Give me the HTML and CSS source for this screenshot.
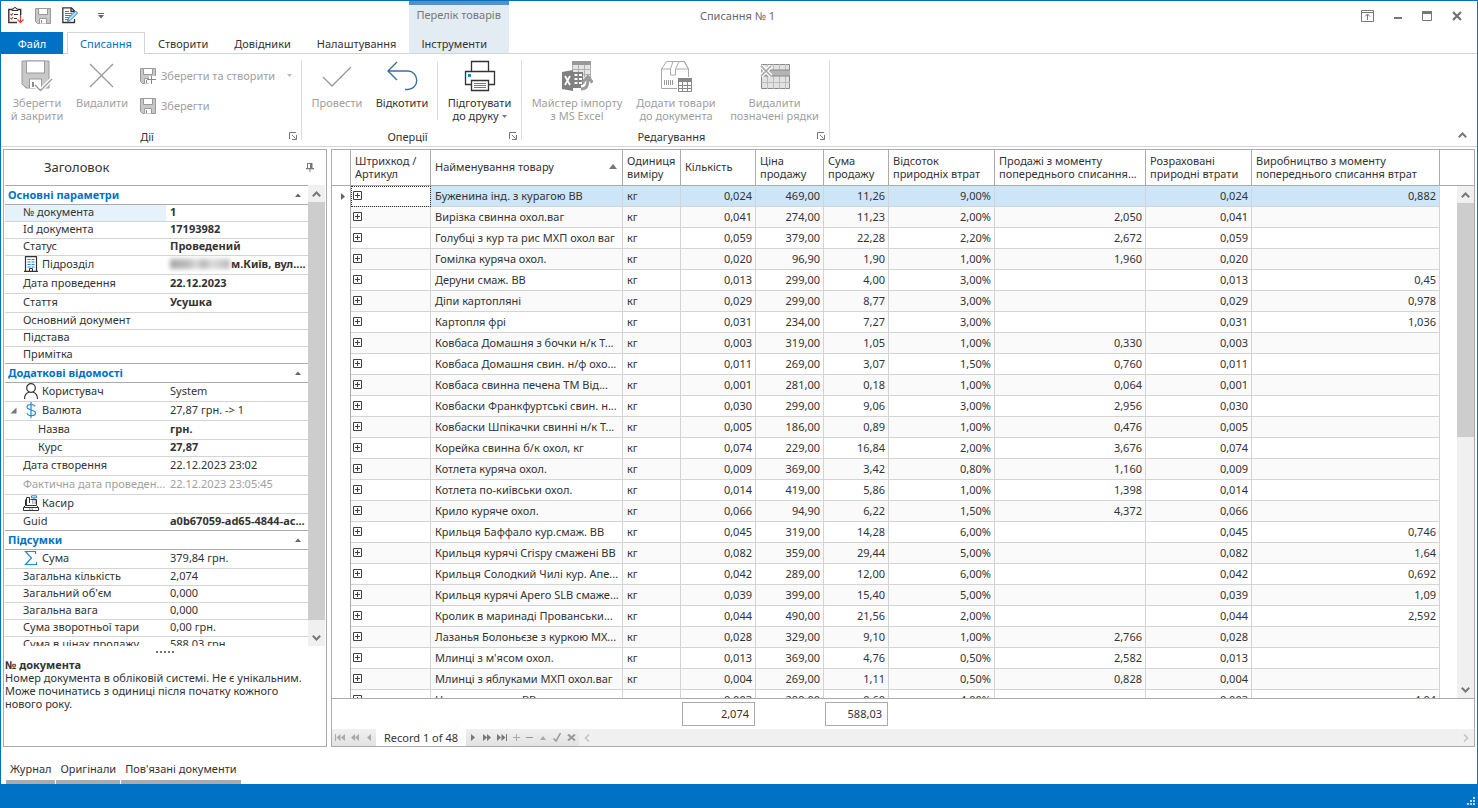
FILE: index.html
```html
<!DOCTYPE html>
<html lang="uk">
<head>
<meta charset="utf-8">
<title>Списання № 1</title>
<link rel="stylesheet" href="styles.css">
</head>
<body>
<svg class="defs" aria-hidden="true">
  <symbol id="plus" viewBox="0 0 9 9"><path d="M.5.5h8v8h-8zM2 4.500h5M4.500 2v5" fill="none" stroke="#404040"/></symbol>
  <symbol id="launch" viewBox="0 0 8 8"><path d="M.5 7V.5H7M7.500 3v4.500H3M3 3l3.500 3.500" fill="none" stroke="#777"/></symbol>
  <symbol id="up" viewBox="0 0 9 6"><path d="M.8 5.200L4.500 1.500l3.700 3.700" fill="none" stroke="#777" stroke-width="2"/></symbol>
  <symbol id="tri" viewBox="0 0 6 4"><path d="M0 4L3 .5 6 4z" fill="#666"/></symbol>
  <symbol id="disk" viewBox="0 0 16 16"><path d="M.5.5h15v15H2.500l-2-2z" fill="#c8c8c8" stroke="#999"/><path d="M3.500.5h9v6h-9zM4.500 15.500v-5h7v5" fill="#fff" stroke="#999"/><path d="M6 12h1v3H6z" fill="#8a8a8a"/></symbol>
</svg>
<div class="window">
  <header class="head">
    <h1 class="title">Списання № 1</h1>
    <div class="quick">
      <button aria-label="Провести"><svg width="16" height="17" viewBox="0 0 16 17"><path d="M4 2.500H.8v13H9M10 2.500h2.700V8" fill="none" stroke="#333" stroke-width="1.400"/><path d="M4 3.500V2h1.500a1.500 1.500 0 0 1 3 0H10v1.500z" fill="#fff" stroke="#333"/><path d="M2.500 7l1 1L5 6M2.500 11l1 1L5 10M12.500 8v7.500M9.500 12.500l3 3 3-3" fill="none" stroke="#d8402f" stroke-width="1.200"/><path d="M6 7.500h4M6 11.500h3" stroke="#333"/></svg></button>
      <button aria-label="Зберегти"><svg width="16" height="16"><use href="#disk"/></svg></button>
      <button aria-label="Редагувати"><svg width="16" height="17" viewBox="0 0 16 17"><path d="M12.500 6V4L9.500.8H.8v14.700h11.700V12M9 1v3.500h3" fill="none" stroke="#333" stroke-width="1.300"/><path d="M3 4.500h4M3 6.500h7M3 8.500h6M3 10.500h4M3 12.500h3" stroke="#4a7ea6"/><path d="M5.500 14.500l1-3.500L13.500 4l2 2-7 7.200z" fill="#b5dcf5" stroke="#2a86c4"/></svg></button>
      <button class="more" aria-label="Налаштувати панель"><svg width="6" height="6" viewBox="0 0 6 6"><path d="M0 .5h6" stroke="#666"/><path d="M0 2h6L3 5.500z" fill="#666"/></svg></button>
    </div>
    <nav class="tabs">
      <button class="file">Файл</button><button class="tab on">Списання</button><button class="tab">Створити</button><button class="tab">Довідники</button><button class="tab">Налаштування</button>
    </nav>
    <div class="context"><span>Перелік товарів</span><button class="tab">Інструменти</button></div>
    <div class="wbtns">
      <button aria-label="Сховати стрічку"><svg width="13" height="12" viewBox="0 0 13 12"><path d="M.5.5h12v11H.5zM.5 2.500h12M6.500 10V4.500M4 6.500l2.500-2.500L9 6.500" fill="none" stroke="#777"/></svg></button>
      <button aria-label="Згорнути"><svg width="8" height="12" viewBox="0 0 8 12"><path d="M0 8h8" stroke="#777" stroke-width="2"/></svg></button>
      <button aria-label="Розгорнути"><svg width="10" height="10" viewBox="0 0 10 10"><path d="M.5.5h9v9h-9z" fill="none" stroke="#777"/><path d="M0 0h10v3H0z" fill="#777"/></svg></button>
      <button aria-label="Закрити"><svg width="10" height="10" viewBox="0 0 10 10"><path d="M1 1l8 8M9 1L1 9" stroke="#707070" stroke-width="2.200"/></svg></button>
    </div>
  </header>

  <section class="ribbon">
    <div class="group g1">
      <div class="tools">
        <button class="big w72" disabled><svg width="32" height="32" viewBox="0 0 32 32"><path d="M1 1h27v27H5l-4-4z" fill="#c8c8c8" stroke="#999"/><path d="M5.500 1h18v12h-18zM8.500 28v-9h12v9" fill="#fff" stroke="#999"/><path d="M11 22h2v5h-2z" fill="#8a8a8a"/><path d="M14 25l5.500 5.500L31 19" fill="none" stroke="#fff" stroke-width="4"/><path d="M14 25l5.500 5.500L31 19" fill="none" stroke="#999" stroke-width="1.300"/></svg><span>Зберегти<br>й закрити</span></button>
        <button class="big w58" disabled><svg width="32" height="32" viewBox="0 0 32 32"><path d="M4 4l23 23M27 4L4 27" stroke="#9a9a9a" stroke-width="1.300"/></svg><span>Видалити</span></button>
        <div class="smalls">
          <button class="small" disabled><svg width="16" height="16"><use href="#disk"/><path d="M9 8h7v8H9z" fill="#fff"/><path d="M11.500 7.500V16M7 11.500h9" stroke="#888"/></svg>Зберегти та створити<svg class="drop" width="5" height="3" viewBox="0 0 5 3"><path d="M0 0h5L2.500 3z" fill="#bbb"/></svg></button>
          <button class="small" disabled><svg width="16" height="16"><use href="#disk"/></svg>Зберегти</button>
        </div>
      </div>
      <div class="cap"><span>Дії</span><button aria-label="Дії: параметри"><svg width="8" height="8"><use href="#launch"/></svg></button></div>
    </div>
    <div class="group">
      <div class="tools">
        <button class="big w70" disabled><svg width="32" height="32" viewBox="0 0 32 32"><path d="M2 17l9 9L30 7" fill="none" stroke="#999" stroke-width="1.300"/></svg><span>Провести</span></button>
        <button class="big w60"><svg width="32" height="32" viewBox="0 0 32 32"><path d="M11 2L2 11l9 9M2 11h20a8.500 9 0 0 1 0 18.500h-3" fill="none" stroke="#3a6ea8" stroke-width="1.400"/></svg><span>Відкотити</span></button>
        <i class="sep"></i>
        <button class="big w83"><svg width="32" height="32" viewBox="0 0 32 32"><path d="M7.500 11V1.500h17V11M7 24.500H1.500v-13h29v13H25M7.500 20.500h17v10h-17z" fill="none" stroke="#333" stroke-width="1.300"/><path d="M10 23.500h12M10 25.500h12M10 27.500h12" stroke="#777"/><path d="M4 14h3v3H4z" fill="#1e88d2"/></svg><span>Підготувати<br>до друку <svg width="5" height="3" class="inl" viewBox="0 0 5 3"><path d="M0 0h5L2.500 3z" fill="#777"/></svg></span></button>
      </div>
      <div class="cap"><span>Оперції</span><button aria-label="Оперції: параметри"><svg width="8" height="8"><use href="#launch"/></svg></button></div>
    </div>
    <div class="group">
      <div class="tools">
        <button class="big w110" disabled><svg width="32" height="32" viewBox="0 0 32 32"><path d="M11.500 1.500h18v22h-18z" fill="#e4e4e4" stroke="#b0b0b0"/><path d="M11 1h19v4H11z" fill="#999"/><path d="M11 9.500h19M11 14.500h19M17.500 5v12M23.500 5v12" stroke="#b0b0b0"/><path d="M1 12l11-2v21L1 29z" fill="#808080"/><path d="M4 16l5 9M9 16l-5 9" stroke="#fff" stroke-width="1.800"/><path d="M12 12h10v16H12z" fill="#808080"/><path d="M13.500 14h3v2h-3zM18 14h3v2h-3zM13.500 18h3v2h-3zM18 18h3v2h-3zM13.500 22h3v2h-3zM18 22h3v2h-3z" fill="#fff"/><path d="M20 28c6 0 7-2 7-10" fill="none" stroke="#fff" stroke-width="6"/><path d="M20 29c5 0 7-2 7-11M21.500 22.500l5.500-6 4.500 6" fill="none" stroke="#9a9a9a" stroke-width="3"/></svg><span>Майстер імпорту<br>з MS Excel</span></button>
        <button class="big w88" disabled><svg width="32" height="32" viewBox="0 0 32 32"><path d="M17 28.500H1.500V9l5-7.500h18L28.500 9v8M1.500 9h9M15.500 9h13M10.500 9L13 1.500M10.500 9v6h5V9L19 1.500M24 1.500L28.500 9" fill="none" stroke="#aaa"/><path d="M4.500 20v5M6.500 20v5M8.500 20v5M10.500 20v5M12.500 20v5" stroke="#999"/><path d="M18.500 18.500h13v13h-13z" fill="#fff" stroke="#888"/><path d="M18 18h14v4H18z" fill="#888"/><path d="M18 25.500h14M18 28.500h14M22.500 22v10M27.500 22v10" stroke="#888"/></svg><span>Додати товари<br>до документа</span></button>
        <button class="big w109" disabled><svg width="32" height="32" viewBox="0 0 32 32"><path d="M2.500 4.500h28v24h-28z" fill="#e2e2e2" stroke="#888"/><path d="M2 10h29v6H2z" fill="#b4b4b4"/><path d="M8.500 4v25M14.500 4v6M14.500 16v13M20.500 4v6M20.500 16v13M26.500 4v6M26.500 16v13M2 22.500h29" stroke="#bbb"/><path d="M2 10h29M2 16h29" stroke="#888"/><path d="M2 6l10 10M12 6L2 16" stroke="#fff" stroke-width="4"/><path d="M2 6l10 10M12 6L2 16" stroke="#aaa" stroke-width="1.600"/></svg><span>Видалити<br>позначені рядки</span></button>
      </div>
      <div class="cap"><span>Редагування</span><button aria-label="Редагування: параметри"><svg width="8" height="8"><use href="#launch"/></svg></button></div>
    </div>
    <button class="collapse" aria-label="Згорнути стрічку"><svg width="9" height="6"><use href="#up"/></svg></button>
  </section>

  <main class="main">
    <aside class="panel side">
      <div class="side-head"><h2>Заголовок</h2><button aria-label="Закріпити"><svg width="8" height="9" viewBox="0 0 8 9"><path d="M1.500 0v5.500M2 .5h4" stroke="#777" fill="none"/><path d="M4 0h2.500v5.500H4zM0 5h8v1.300H0zM3.500 6h1v3h-1z" fill="#777"/></svg></button></div>
      <div class="props">
        <div class="clip">
        <table class="pg">
          <colgroup><col class="c-key"><col></colgroup>
          <tr class="cat"><th colspan="2"><div>Основні параметри<button aria-label="Згорнути"><svg width="6" height="4"><use href="#tri"/></svg></button></div></th></tr>
          <tr class="sel"><th>№ документа</th><td>1</td></tr>
          <tr><th>Id документа</th><td>17193982</td></tr>
          <tr><th>Статус</th><td>Проведений</td></tr>
          <tr class="t"><th><span class="k"><svg width="16" height="16" viewBox="0 0 16 16"><path d="M2.500 15.500V.6h11v14.900M1 15.400h14" fill="none" stroke="#333" stroke-width="1.200"/><path d="M4.500 3.500h3M8.500 3.500h3M4.500 6h3M8.500 6h3M4.500 8.500h3M8.500 8.500h3M4.500 11h3M8.500 11h3" stroke="#1e88d2"/><path d="M6.500 15v-2.500h3V15" fill="none" stroke="#333"/></svg>Підрозділ</span></th><td><span class="k"><i class="masked"></i>м.Київ, вул....</span></td></tr>
          <tr class="t"><th>Дата проведення</th><td>22.12.2023</td></tr>
          <tr class="t"><th>Стаття</th><td>Усушка</td></tr>
          <tr><th>Основний документ</th><td></td></tr>
          <tr><th>Підстава</th><td></td></tr>
          <tr class="last"><th>Примітка</th><td></td></tr>
          <tr class="cat"><th colspan="2"><div>Додаткові відомості<button aria-label="Згорнути"><svg width="6" height="4"><use href="#tri"/></svg></button></div></th></tr>
          <tr class="t n"><th><span class="k"><svg width="16" height="16" viewBox="0 0 16 16"><circle cx="8" cy="5" r="4.300" fill="none" stroke="#333" stroke-width="1.200"/><path d="M1.500 16c0-5 3-6.500 5-7M14.500 16c0-5-3-6.500-5-7" fill="none" stroke="#333" stroke-width="1.200"/></svg>Користувач</span></th><td>System</td></tr>
          <tr class="t n x"><th><span class="k"><svg class="exp" width="7" height="7" viewBox="0 0 7 7"><path d="M6.500.5v6h-6z" fill="#777"/></svg><svg width="16" height="16" viewBox="0 0 16 16"><path d="M12 4.500C11.500 2 4 1.500 4 5c0 3.500 8.500 2.500 8.500 6 0 3.500-8 3.500-8.500 0M8 0v16" fill="none" stroke="#1e88d2" stroke-width="1.200"/></svg>Валюта</span></th><td>27,87 грн. -&gt; 1</td></tr>
          <tr class="t sub"><th>Назва</th><td>грн.</td></tr>
          <tr class="sub"><th>Курс</th><td>27,87</td></tr>
          <tr class="t n"><th>Дата створення</th><td>22.12.2023 23:02</td></tr>
          <tr class="t n off"><th>Фактична дата проведен...</th><td>22.12.2023 23:05:45</td></tr>
          <tr class="t"><th><span class="k"><svg width="16" height="16" viewBox="0 0 16 16"><path d="M2.500 10.500h11l2 2v3H.5v-3zM.5 12.500h15" fill="none" stroke="#333"/><path d="M3.500 10V2.500h3V8M2.500 4.500v6M13.500 10V4.500H7.500" fill="none" stroke="#333"/><path d="M9 6h4M9 8h4M6 14h4" stroke="#666" stroke-dasharray="1 .5"/><path d="M8.500.8h5v2h-5zM11 3v1.500" fill="none" stroke="#1e88d2"/></svg>Касир</span></th><td></td></tr>
          <tr class="last"><th>Guid</th><td>a0b67059-ad65-4844-ac...</td></tr>
          <tr class="cat"><th colspan="2"><div>Підсумки<button aria-label="Згорнути"><svg width="6" height="4"><use href="#tri"/></svg></button></div></th></tr>
          <tr class="t n"><th><span class="k"><svg width="16" height="16" viewBox="0 0 16 16"><path d="M12.500 4V1.500H2.500L8.500 8l-6 6.500h11V12" fill="none" stroke="#1e88d2" stroke-width="1.200"/></svg>Сума</span></th><td>379,84 грн.</td></tr>
          <tr class="n"><th>Загальна кількість</th><td>2,074</td></tr>
          <tr class="n"><th>Загальний об'єм</th><td>0,000</td></tr>
          <tr class="n"><th>Загальна вага</th><td>0,000</td></tr>
          <tr class="n"><th>Сума зворотньої тари</th><td>0,00 грн.</td></tr>
          <tr class="n"><th>Сума в цінах продажу</th><td>588,03 грн.</td></tr>
        </table>
        </div>
        <div class="vbar full"><button aria-label="Вгору"><svg width="9" height="6"><use href="#up"/></svg></button><i></i><button class="down" aria-label="Вниз"><svg width="9" height="6"><use href="#up"/></svg></button></div>
      </div>
      <div class="desc"><div class="dots"><i></i><i></i><i></i><i></i><i></i></div><h3>№ документа</h3><p>Номер документа в обліковій системі. Не є унікальним. Може починатись з одиниці після початку кожного нового року.</p></div>
    </aside>

    <section class="panel list">
      <div class="rows">
        <div class="clip">
        <table class="grid">
          <colgroup><col class="k0"><col class="k1"><col class="k2"><col class="k3"><col class="k4"><col class="k5"><col class="k6"><col class="k7"><col class="k8"><col class="k9"><col class="k10"><col></colgroup>
          <thead><tr><th></th><th>Штрихкод /<br>Артикул</th><th><div class="sort">Найменування товару<svg width="8" height="5" viewBox="0 0 8 5"><path d="M0 5l4-5 4 5z" fill="#777"/></svg></div></th><th>Одиниця<br>виміру</th><th>Кількість</th><th>Ціна<br>продажу</th><th>Сума<br>продажу</th><th>Відсоток<br>природніх втрат</th><th>Продажі з моменту<br>попереднього списання...</th><th>Розраховані<br>природні втрати</th><th>Виробництво з моменту<br>попереднього списання втрат</th><th></th></tr></thead>
          <tbody>
          <tr class="cur"><td><svg width="4" height="7" viewBox="0 0 4 7"><path d="M0 0l4 3.500L0 7z" fill="#666"/></svg><td><button aria-label="Розгорнути"><svg width="9" height="9"><use href="#plus"/></svg></button><td>Буженина інд. з курагою ВВ<td>кг<td>0,024<td>469,00<td>11,26<td>9,00%<td><td>0,024<td>0,882<td></tr>
          <tr><td><td><button aria-label="Розгорнути"><svg width="9" height="9"><use href="#plus"/></svg></button><td>Вирізка свинна охол.ваг<td>кг<td>0,041<td>274,00<td>11,23<td>2,00%<td>2,050<td>0,041<td><td></tr>
          <tr><td><td><button aria-label="Розгорнути"><svg width="9" height="9"><use href="#plus"/></svg></button><td>Голубці з кур та рис МХП охол ваг<td>кг<td>0,059<td>379,00<td>22,28<td>2,20%<td>2,672<td>0,059<td><td></tr>
          <tr><td><td><button aria-label="Розгорнути"><svg width="9" height="9"><use href="#plus"/></svg></button><td>Гомілка куряча охол.<td>кг<td>0,020<td>96,90<td>1,90<td>1,00%<td>1,960<td>0,020<td><td></tr>
          <tr><td><td><button aria-label="Розгорнути"><svg width="9" height="9"><use href="#plus"/></svg></button><td>Деруни смаж. ВВ<td>кг<td>0,013<td>299,00<td>4,00<td>3,00%<td><td>0,013<td>0,45<td></tr>
          <tr><td><td><button aria-label="Розгорнути"><svg width="9" height="9"><use href="#plus"/></svg></button><td>Діпи картопляні<td>кг<td>0,029<td>299,00<td>8,77<td>3,00%<td><td>0,029<td>0,978<td></tr>
          <tr><td><td><button aria-label="Розгорнути"><svg width="9" height="9"><use href="#plus"/></svg></button><td>Картопля фрі<td>кг<td>0,031<td>234,00<td>7,27<td>3,00%<td><td>0,031<td>1,036<td></tr>
          <tr><td><td><button aria-label="Розгорнути"><svg width="9" height="9"><use href="#plus"/></svg></button><td>Ковбаса Домашня з бочки н/к Т...<td>кг<td>0,003<td>319,00<td>1,05<td>1,00%<td>0,330<td>0,003<td><td></tr>
          <tr><td><td><button aria-label="Розгорнути"><svg width="9" height="9"><use href="#plus"/></svg></button><td>Ковбаса Домашня свин. н/ф охо...<td>кг<td>0,011<td>269,00<td>3,07<td>1,50%<td>0,760<td>0,011<td><td></tr>
          <tr><td><td><button aria-label="Розгорнути"><svg width="9" height="9"><use href="#plus"/></svg></button><td>Ковбаса свинна печена ТМ Від...<td>кг<td>0,001<td>281,00<td>0,18<td>1,00%<td>0,064<td>0,001<td><td></tr>
          <tr><td><td><button aria-label="Розгорнути"><svg width="9" height="9"><use href="#plus"/></svg></button><td>Ковбаски Франкфуртські свин. н...<td>кг<td>0,030<td>299,00<td>9,06<td>3,00%<td>2,956<td>0,030<td><td></tr>
          <tr><td><td><button aria-label="Розгорнути"><svg width="9" height="9"><use href="#plus"/></svg></button><td>Ковбаски Шпікачки свинні н/к Т...<td>кг<td>0,005<td>186,00<td>0,89<td>1,00%<td>0,476<td>0,005<td><td></tr>
          <tr><td><td><button aria-label="Розгорнути"><svg width="9" height="9"><use href="#plus"/></svg></button><td>Корейка свинна б/к охол, кг<td>кг<td>0,074<td>229,00<td>16,84<td>2,00%<td>3,676<td>0,074<td><td></tr>
          <tr><td><td><button aria-label="Розгорнути"><svg width="9" height="9"><use href="#plus"/></svg></button><td>Котлета куряча охол.<td>кг<td>0,009<td>369,00<td>3,42<td>0,80%<td>1,160<td>0,009<td><td></tr>
          <tr><td><td><button aria-label="Розгорнути"><svg width="9" height="9"><use href="#plus"/></svg></button><td>Котлета по-київськи охол.<td>кг<td>0,014<td>419,00<td>5,86<td>1,00%<td>1,398<td>0,014<td><td></tr>
          <tr><td><td><button aria-label="Розгорнути"><svg width="9" height="9"><use href="#plus"/></svg></button><td>Крило куряче охол.<td>кг<td>0,066<td>94,90<td>6,22<td>1,50%<td>4,372<td>0,066<td><td></tr>
          <tr><td><td><button aria-label="Розгорнути"><svg width="9" height="9"><use href="#plus"/></svg></button><td>Крильця Баффало кур.смаж. ВВ<td>кг<td>0,045<td>319,00<td>14,28<td>6,00%<td><td>0,045<td>0,746<td></tr>
          <tr><td><td><button aria-label="Розгорнути"><svg width="9" height="9"><use href="#plus"/></svg></button><td>Крильця курячі Crispy смажені ВВ<td>кг<td>0,082<td>359,00<td>29,44<td>5,00%<td><td>0,082<td>1,64<td></tr>
          <tr><td><td><button aria-label="Розгорнути"><svg width="9" height="9"><use href="#plus"/></svg></button><td>Крильця Солодкий Чилі кур. Апе...<td>кг<td>0,042<td>289,00<td>12,00<td>6,00%<td><td>0,042<td>0,692<td></tr>
          <tr><td><td><button aria-label="Розгорнути"><svg width="9" height="9"><use href="#plus"/></svg></button><td>Крильця курячі Apero SLB смаже...<td>кг<td>0,039<td>399,00<td>15,40<td>5,00%<td><td>0,039<td>1,09<td></tr>
          <tr><td><td><button aria-label="Розгорнути"><svg width="9" height="9"><use href="#plus"/></svg></button><td>Кролик в маринаді Прованськи...<td>кг<td>0,044<td>490,00<td>21,56<td>2,00%<td><td>0,044<td>2,592<td></tr>
          <tr><td><td><button aria-label="Розгорнути"><svg width="9" height="9"><use href="#plus"/></svg></button><td>Лазанья Болоньєзе з куркою МХ...<td>кг<td>0,028<td>329,00<td>9,10<td>1,00%<td>2,766<td>0,028<td><td></tr>
          <tr><td><td><button aria-label="Розгорнути"><svg width="9" height="9"><use href="#plus"/></svg></button><td>Млинці з м'ясом охол.<td>кг<td>0,013<td>369,00<td>4,76<td>0,50%<td>2,582<td>0,013<td><td></tr>
          <tr><td><td><button aria-label="Розгорнути"><svg width="9" height="9"><use href="#plus"/></svg></button><td>Млинці з яблуками МХП охол.ваг<td>кг<td>0,004<td>269,00<td>1,11<td>0,50%<td>0,828<td>0,004<td><td></tr>
          <tr><td><td><button aria-label="Розгорнути"><svg width="9" height="9"><use href="#plus"/></svg></button><td>Нагетси з курки ВВ<td>кг<td>0,003<td>299,00<td>0,60<td>4,00%<td><td>0,003<td>4,04<td></tr>
          </tbody>
        </table>
        </div>
        <div class="rail"><div class="rail-head"></div><div class="vbar half"><button aria-label="Вгору"><svg width="9" height="6"><use href="#up"/></svg></button><i></i><button class="down" aria-label="Вниз"><svg width="9" height="6"><use href="#up"/></svg></button></div></div>
      </div>
      <div class="totals"><output class="qty">2,074</output><output class="sum">588,03</output></div>
      <div class="navi">
        <div class="nb">
          <button disabled aria-label="Перший"><svg width="10" height="7" viewBox="0 0 10 7"><path d="M.5 0v7" stroke="#aaa"/><path d="M5.500 0v7L1.500 3.500zM10 0v7L6 3.500z" fill="#aaa"/></svg></button>
          <button disabled aria-label="Попередня сторінка"><svg width="8" height="7" viewBox="0 0 8 7"><path d="M4 0v7L0 3.500zM8 0v7L4 3.500z" fill="#aaa"/></svg></button>
          <button disabled aria-label="Попередній"><svg width="8" height="7" viewBox="0 0 8 7"><path d="M6 0v7L2 3.500z" fill="#aaa"/></svg></button>
        </div>
        <span class="rec">Record 1 of 48</span>
        <div class="nb after">
          <button aria-label="Наступний"><svg width="8" height="7" viewBox="0 0 8 7"><path d="M2 0v7l4-3.500z" fill="#777"/></svg></button>
          <button aria-label="Наступна сторінка"><svg width="8" height="7" viewBox="0 0 8 7"><path d="M0 0v7l4-3.500zM4 0v7l4-3.500z" fill="#777"/></svg></button>
          <button aria-label="Останній"><svg width="10" height="7" viewBox="0 0 10 7"><path d="M9.500 0v7" stroke="#777"/><path d="M0 0v7l4-3.500zM4.500 0v7l4-3.500z" fill="#777"/></svg></button>
          <button disabled aria-label="Додати"><svg width="7" height="7" viewBox="0 0 7 7"><path d="M0 3.500h7M3.500 0v7" stroke="#aaa"/></svg></button>
          <button disabled aria-label="Видалити"><svg width="7" height="7" viewBox="0 0 7 7"><path d="M0 3.500h7" stroke="#999"/></svg></button>
          <button disabled aria-label="Редагувати"><svg width="8" height="4" viewBox="0 0 8 4"><path d="M1 4l3-4 3 4z" fill="#aaa"/></svg></button>
          <button disabled aria-label="Прийняти"><svg width="8" height="9" viewBox="0 0 8 9"><path d="M.5 5.500L3 8l4.500-8" fill="none" stroke="#999" stroke-width="1.500"/></svg></button>
          <button disabled aria-label="Скасувати"><svg width="9" height="7" viewBox="0 0 9 7"><path d="M1 .5l7 6M8 .5l-7 6" stroke="#999" stroke-width="2"/></svg></button>
        </div>
        <div class="hbar"><button aria-label="Ліворуч"><svg width="6" height="8" viewBox="0 0 6 8"><path d="M5 .5L1.500 4 5 7.500" fill="none" stroke="#c4c4c4" stroke-width="1.600"/></svg></button><button aria-label="Праворуч"><svg width="6" height="8" viewBox="0 0 6 8"><path d="M1 .5L4.500 4 1 7.500" fill="none" stroke="#c4c4c4" stroke-width="1.600"/></svg></button></div>
      </div>
    </section>
  </main>

  <nav class="bottom"><button>Журнал</button><button>Оригінали</button><button>Пов'язані документи</button></nav>
</div>
<footer class="status"><svg width="8" height="8" viewBox="0 0 8 8"><path d="M6 0h2v2H6zM3 3h2v2H3zM6 3h2v2H6zM0 6h2v2H0zM3 6h2v2H3zM6 6h2v2H6z" fill="#c2d6e8"/></svg></footer>
</body>
</html>
```
FILE: styles.css
```css
* { box-sizing: border-box; }
body { margin: 0; height: 100vh; display: flex; flex-direction: column; overflow: hidden; background: #fff; color: #333; font: 11px/13px "Noto Sans", "Open Sans", sans-serif; }
button { font: inherit; color: inherit; background: none; border: 0; padding: 0; margin: 0; }
button svg, .k svg { display: block; flex: none; }
h1, h2, h3, p { margin: 0; font: inherit; }
table { border-collapse: separate; border-spacing: 0; table-layout: fixed; width: 100%; }
.defs { display: none; }
.window { flex: 1; min-height: 0; display: flex; flex-direction: column; border: 1px solid #0072c6; border-bottom: 0; }

.head { display: grid; grid-template-columns: auto auto 1fr; grid-template-rows: 31px 21px; border-bottom: 1px solid #d4d4d4; }
.title { grid-area: 1 / 1 / 2 / 4; text-align: center; line-height: 30px; color: #666; padding-right: 3px; }
.quick { grid-area: 1 / 1; display: flex; align-items: center; gap: 11px; padding: 0 0 2px 7px; }
.quick .more { margin-left: 9px; }
.tabs { grid-area: 2 / 1; display: flex; margin-bottom: -1px; }
.file { width: 62px; margin-right: 4px; background: #0072c6; color: #fff; }
.tab { padding: 1px 13px 0; }
.tab.on { padding: 0 12px; border: 1px solid #d4d4d4; border-bottom: 0; background: #fff; color: #0072c6; }
.context { grid-area: 1 / 2 / 3 / 3; display: flex; flex-direction: column; justify-content: space-between; align-items: flex-start; background: #e3ebf3; border-top: 4px solid #5b8fbe; }
.context span { padding: 3px 8px 0 7px; color: #777; }
.context .tab { height: 21px; padding-left: 12px; }
.wbtns { grid-area: 1 / 3; justify-self: end; display: flex; align-items: center; gap: 20px; padding: 0 15px 2px 0; }

.ribbon { display: flex; padding: 6px 0; border-bottom: 1px solid #d4d4d4; }
.group { display: flex; flex-direction: column; justify-content: space-between; height: 80px; border-right: 1px solid #dcdcdc; }
.g1 { width: 301px; }
.tools { display: flex; }
.big { display: flex; flex-direction: column; align-items: center; gap: 4px; white-space: nowrap; }
.big:disabled, .small:disabled { color: #a0a0a0; }
.w58 { width: 58px; } .w60 { width: 60px; } .w70 { width: 70px; } .w72 { width: 72px; } .w83 { width: 83px; } .w88 { width: 88px; } .w109 { width: 109px; } .w110 { width: 110px; }
.inl { vertical-align: 2px; display: inline !important; }
.sep { width: 1px; height: 58px; margin: 2px 0 0 5px; background: #dcdcdc; }
.smalls { flex: 1; display: flex; flex-direction: column; gap: 14px; padding: 8px 9px 0; }
.small { display: flex; align-items: center; gap: 5px; height: 16px; padding-bottom: 1px; white-space: nowrap; }
.drop { margin-left: auto; }
.cap { display: flex; align-items: center; padding: 0 4px; height: 8px; }
.cap span { flex: 1; text-align: center; }
.collapse { margin-left: auto; padding-right: 10px; align-self: flex-end; margin-bottom: 2px; }

.main { flex: 1; min-height: 0; display: flex; gap: 4px; padding: 2px 2px 0; }
.panel { border: 1px solid #ababab; display: flex; flex-direction: column; }
.side { flex: none; width: 324px; padding: 0 1px; }
.side-head { display: flex; align-items: center; justify-content: space-between; height: 35px; padding: 0 11px 0 39px; font-size: 13px; }
.props { flex: 1; min-height: 0; display: flex; }
.props .clip { border-top: 1px solid #ababab; }
.clip { flex: 1; min-width: 0; overflow: hidden; }
.c-key { width: 161px; }
.pg th, .pg td { height: 17px; padding: 0 0 2px 4px; border-bottom: 1px solid #d4d4d4; text-align: left; font-weight: 400; line-height: 14px; white-space: nowrap; overflow: hidden; }
.pg td { font-weight: 700; }
.pg th { padding-left: 18px; }
.pg .t th, .pg .t td { height: 19px; }
.pg .n td { font-weight: 400; }
.pg .last th, .pg .last td { border-color: #ababab; }
.pg .sel th { background: #e5f1fb; }
.pg .sub th { padding-left: 33px; }
.pg .x th { padding-left: 5px; }
.pg .off th, .pg .off td { color: #a0a0a0; }
.pg .cat th { height: 19px; padding: 0 7px 1px 3px; border-color: #ababab; color: #0072c6; font-weight: 700; }
.cat div { display: flex; align-items: center; justify-content: space-between; }
.k { display: flex; align-items: center; height: 16px; gap: 3px; }
.exp { margin-right: 3px; }
.masked { flex: none; width: 60px; height: 10px; margin-right: -2px; background: linear-gradient(90deg, #aaa, #bbb 30%, #ddd 45%, #b5b5b5 55%, #ddd 70%, #bbb); filter: blur(2px); }
.vbar { width: 17px; display: flex; flex-direction: column; background: #f0f0f0; }
.vbar button { height: 17px; display: flex; justify-content: center; align-items: center; }
.vbar i { background: #cdcdcd; }
.full i { flex: 1; }
.vbar.full .down { height: 26px; padding-top: 10px; }
.half { flex: 1; }
.half i { flex: 0 1 234px; }
.half .down { margin-top: auto; }
.down svg { transform: rotate(180deg); }
.desc { height: 100px; }
.desc p { padding-right: 16px; }
.dots { display: flex; justify-content: center; gap: 2px; padding: 5px 0; }
.dots i { width: 2px; height: 2px; background: #777; }
.desc h3 { font-weight: 700; }

.list { flex: 1; min-width: 0; }
.rows { flex: 1; min-height: 0; display: flex; border-bottom: 1px solid #ababab; }
.rail { display: flex; flex-direction: column; width: 17px; }
.rail-head { height: 36px; border-bottom: 1px solid #ababab; }
.k0 { width: 19px; } .k1 { width: 80px; } .k2 { width: 192px; } .k3 { width: 58px; } .k4 { width: 75px; } .k5 { width: 68px; } .k6 { width: 65px; } .k7 { width: 106px; } .k8 { width: 151px; } .k9 { width: 106px; } .k10 { width: 188px; }
.grid th { height: 36px; padding: 0 0 2px 4px; border: solid #ababab; border-width: 0 1px 1px 0; text-align: left; font-weight: 400; white-space: nowrap; overflow: hidden; }
.grid th:last-child { border-right: 0; }
.sort { display: flex; justify-content: space-between; align-items: center; padding-right: 5px; }
.grid td { height: 21px; padding: 0 3px 2px; border: solid #d4d4d4; border-width: 0 1px 1px 0; text-align: right; white-space: nowrap; overflow: hidden; }
.grid td:nth-child(1) { padding: 0 5px 0 9px; border-color: #ababab; border-bottom: 0; background: #fff; }
.grid td:nth-child(2) { padding: 0 2px 1px; text-align: left; }
.grid td:nth-child(3), .grid td:nth-child(4) { padding: 0 0 2px 4px; text-align: left; }
.grid td:nth-child(12) { border: 0; background: #fff; }
.grid td svg { display: block; }
.grid td button { display: block; }
.grid tr:nth-child(even) td { background: #fafafa; }
.grid tr:nth-child(even) td:first-child, .grid tr td:last-child { background: #fff !important; }
.grid .cur td { background: #cde6f7; }
.grid .cur td:nth-child(1) { background: #fff; }
.grid .cur td:nth-child(2) { background: #fff; outline: 1px dotted #333; outline-offset: -1px; }
.totals { display: flex; gap: 70px; padding: 3px 0 3px 350px; }
.totals output { height: 24px; padding: 0 5px; border: 1px solid #ababab; text-align: right; line-height: 22px; }
.qty { width: 73px; }
.sum { width: 63px; }
.navi { display: flex; height: 17px; }
.nb { display: flex; align-items: center; gap: 6px; padding: 0 3px; background: linear-gradient(#f0f0f0, #e2e2e2); }
.after { gap: 6px; }
.rec { padding: 0 8px; line-height: 18px; }
.hbar { flex: 1; display: flex; justify-content: space-between; align-items: center; padding: 0 5px; background: #f0f0f0; }

.bottom { display: flex; gap: 1px; height: 37px; padding-left: 5px; }
.bottom button { padding: 10px 4px 0; border-bottom: 4px solid #ababab; }
.status { display: flex; justify-content: flex-end; align-items: flex-end; height: 24px; padding: 3px; background: #0072c6; }
```
